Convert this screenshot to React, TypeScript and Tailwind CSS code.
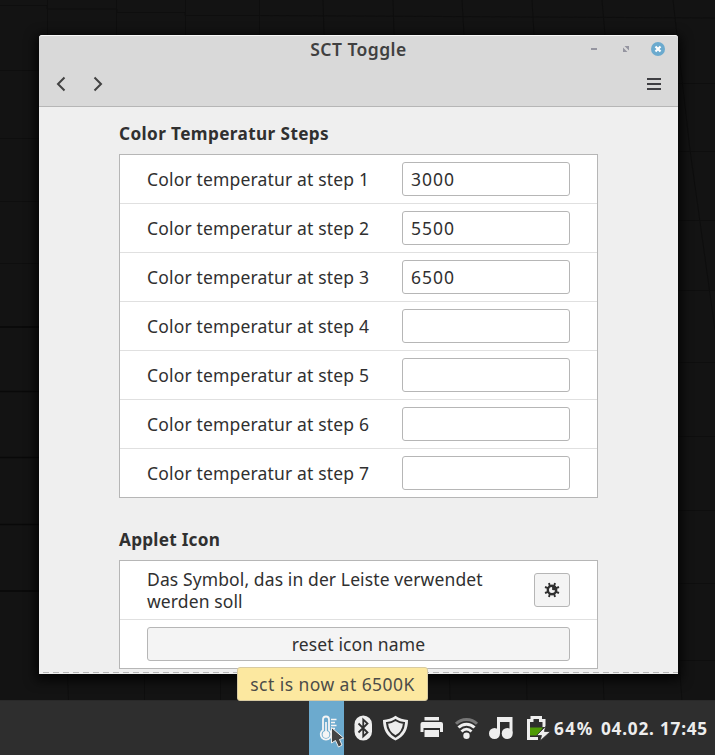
import type { ReactNode } from "react";

const steps = ["3000", "5500", "6500", "", "", "", ""];

function Wallpaper() {
  return (
    <svg className="absolute inset-0" width="715" height="755" viewBox="0 0 715 755" fill="none">
      <rect width="715" height="755" fill="#131313" />
      <g stroke="#0e0e0e" strokeWidth="1">
        <path d="M0 5.500H47V9H117V12.500H185V15.500H260L715 18" />
        <path d="M47.500 0V35M116.500 0V35M185.500 0V35M259.500 0V35M323 0L324 35M393 0L394 35M462 0L464 35M532 0L534 35M602 0L605 35M673 0L690 150L715 330" />
        <path d="M0 70.500H39M0 138.500H39M0 201.500H39M0 263.500H39" />
        <path d="M678 83.500H715M678 151.500H715M678 220.500H715M678 290.500H715M678 362.500H715M678 436.500H715M678 510.500H715M678 583.500H715M678 660.500H715" />
        <path d="M67.500 674L68.500 701M144.500 674V701M220.500 674V701M449.500 674L450 701M526.500 674L527 701M603 674L604 701M679 660L682 701" />
      </g>
      <path d="M0 327H39M0 391.500H39M0 457.500H39M0 524.500H39M0 591H39" stroke="#090909" strokeWidth="1.500" />
    </svg>
  );
}

function TrayIcon({ w, children }: { w: number; children: ReactNode }) {
  return (
    <svg className="block shrink-0" width={w} height="27" viewBox={`0 0 ${w} 27`} fill="none">
      {children}
    </svg>
  );
}

function Header() {
  return (
    <header className="h-[72px] shrink-0 rounded-t-[3px] border-t border-b border-t-[#f8f8f8] border-b-[#b6b6b6] bg-[#d9d9d9]">
      <div className="flex h-[26px] items-center pr-[13px] pl-[107px]">
        <h1 className="flex-1 text-center text-[17.5px] leading-[26px] font-semibold tracking-[0.45px] text-[#404040]">SCT Toggle</h1>
        <svg width="94" height="20" viewBox="0 0 94 20" fill="none">
          <path d="M20 10H26" stroke="#9595a0" strokeWidth="2" />
          <path d="M53.500 7H58V11.500ZM52 8.500L56.500 13H52Z" fill="#9595a0" />
          <circle cx="87" cy="10" r="7" fill="#6baace" />
          <path d="M84.500 7.500L89.500 12.500M89.500 7.500L84.500 12.500" stroke="#fff" strokeWidth="2.200" />
        </svg>
      </div>
      <div className="flex h-11 items-center justify-between pr-[14px] pl-[15px]">
        <svg width="56" height="18" viewBox="0 0 56 18" fill="none" stroke="#424242" strokeWidth="2">
          <path d="M10.500 2.500L4 9L10.500 15.500M40.500 2.500L47 9L40.500 15.500" />
        </svg>
        <svg width="18" height="18" viewBox="0 0 18 18" stroke="#3f3f43" strokeWidth="2">
          <path d="M1 4H15M1 9H15M1 14H15" />
        </svg>
      </div>
    </header>
  );
}

function Field({ step, value }: { step: number; value: string }) {
  return (
    <label className="flex h-12 items-center justify-between px-[27px]">
      <span className="text-[17.5px] tracking-[0.16px] whitespace-nowrap">Color temperatur at step {step}</span>
      <input
        defaultValue={value}
        className="h-[34px] w-[168px] rounded-[3px] border border-[#b6b6b6] bg-white px-2 text-[17.5px] tracking-[0.95px] outline-none"
      />
    </label>
  );
}

function SettingsWindow() {
  return (
    <main className="absolute top-[35px] left-[39px] flex h-[639px] w-[639px] flex-col overflow-hidden rounded-t-[3px] bg-[#efefef] text-[#303030] shadow-[0_3px_12px_3px_rgba(0,0,0,0.8)]">
      <Header />
      <div className="flex flex-1 flex-col px-20 pt-[14px]">
        <h2 className="h-[33px] text-[17.2px] leading-[26px] font-bold tracking-[0.38px]">Color Temperatur Steps</h2>
        <section className="divide-y divide-[#e0e0e0] border border-[#b6b6b6] bg-white">
          {steps.map((value, i) => (
            <div key={i}><Field step={i + 1} value={value} /></div>
          ))}
        </section>
        <h2 className="mt-7 h-[34px] text-[17.2px] leading-[27px] font-bold tracking-[0.25px]">Applet Icon</h2>
        <section className="border border-[#b6b6b6] bg-white">
          <div className="flex h-[59px] items-center justify-between border-b border-[#e0e0e0] px-[27px]">
            <p className="text-[17.5px] leading-[22px] tracking-[0.11px] whitespace-nowrap">
              Das Symbol, das in der Leiste verwendet<br />werden soll
            </p>
            <button className="flex h-[34px] w-9 items-center justify-center rounded-[3px] border border-[#b6b6b6] bg-[#f4f4f4]">
              <svg width="16" height="16" viewBox="0 0 16 16" fill="none" stroke="#303030">
                <circle cx="8" cy="8" r="4.200" strokeWidth="2.400" />
                <path d="M5.800 4L5 1M10.200 4L11 1M4 6.200L1 5M4 9.800L1 11M12 6.200L15 5M12 9.800L15 11M5.800 12L5 15M10.200 12L11 15" strokeWidth="1.900" />
                <path d="M8 4L12 4L12 8.500L8.200 8Z" fill="#303030" stroke="none" />
              </svg>
            </button>
          </div>
          <div className="flex h-12 items-center px-[27px]">
            <button className="h-[34px] w-full rounded-[3px] border border-[#b6b6b6] bg-[#f4f4f4] text-[17.5px] leading-8 tracking-[0.12px]">reset icon name</button>
          </div>
        </section>
      </div>
      <svg className="shrink-0" width="639" height="5" viewBox="0 0 639 5">
        <path d="M4 3.500H639" stroke="#b8b8b8" strokeDasharray="6 4" />
      </svg>
    </main>
  );
}

function Panel() {
  return (
    <footer className="absolute bottom-0 left-0 flex h-[55px] w-full items-center border-t border-[#292929] bg-[#2e2e2e] pl-[309px] text-[17.2px] font-bold text-[#ededed]">
      <div className="flex h-full w-[35px] items-center bg-[#6caace]">
        <TrayIcon w={35}>
          <path d="M14 15V4.500a3 3 0 0 1 6 0V15a5.300 5.300 0 1 1-6 0Z" stroke="#f5f5f5" strokeWidth="1.800" />
          <path d="M17 7V20" stroke="#f5f5f5" strokeWidth="1.700" />
          <circle cx="17" cy="19.500" r="3.400" fill="#f5f5f5" />
          <path d="M22 4.500H27.500M22 7.500H26M22 10.500H27.500M22 13.500H26" stroke="#f5f5f5" strokeWidth="1.400" />
        </TrayIcon>
      </div>
      <div className="flex w-[210px] items-center">
        <TrayIcon w={34}>
          <rect x="10.500" y="0.500" width="17.500" height="25" rx="8.750" fill="#eee" />
          <path d="M14.500 8.500L23.500 17.500L19.250 21.500V4.500L23.500 8.500L14.500 17.500" stroke="#303030" strokeWidth="1.800" />
        </TrayIcon>
        <TrayIcon w={36}>
          <path d="M17.500 0.800C14 3.500 9.500 4.500 5 5C5 14 8 21 17.500 25.500C27 21 30 14 30 5C25.500 4.500 21 3.500 17.500 0.800Z" fill="#eee" />
          <path d="M17.500 5C14.500 7 11.500 7.800 9 8C9.500 14.500 12 18.500 17.500 21.500C23 18.500 25.500 14.500 26 8C23.500 7.800 20.500 7 17.500 5Z" stroke="#303030" strokeWidth="2" />
        </TrayIcon>
        <TrayIcon w={35}>
          <path d="M10.500 2H25V5.500H10.500ZM8.500 7H27Q29 7 29 9V17H26V13H9.500V17H6.500V9Q6.500 7 8.500 7ZM10.500 15H25V22H10.500Z" fill="#eee" />
        </TrayIcon>
        <TrayIcon w={35}>
          <path d="M7 8.800C12.500 3 22.500 3 28 8.800" stroke="#777" strokeWidth="3" />
          <path d="M9.500 12.500C14 8 21 8 25.500 12.500" stroke="#eee" strokeWidth="3" />
          <path d="M12.500 16.500C15.500 13.500 19.500 13.500 22.500 16.500" stroke="#eee" strokeWidth="2.800" />
          <circle cx="17.500" cy="20.800" r="3.200" fill="#eee" />
        </TrayIcon>
        <TrayIcon w={35}>
          <path d="M13 18V2H28.500V18H25.500V7H16V18Z" fill="#eee" />
          <circle cx="10.500" cy="18.500" r="5.500" fill="#eee" />
          <circle cx="23.200" cy="18.500" r="5.500" fill="#eee" />
        </TrayIcon>
        <TrayIcon w={35}>
          <path d="M11 12.500H24L18 20.500H11Z" fill="#4e9a06" />
          <path d="M19 23.500H9.500V5.500H13V2.500H21.500V5.500H25V12" stroke="#eee" strokeWidth="3" />
          <path d="M26.500 11.500L17.500 20.500H22.500L21 26L31.500 16.500H25.500Z" fill="#eee" stroke="#2e2e2e" strokeWidth="0.800" />
        </TrayIcon>
      </div>
      <span className="w-[47px] pt-px tracking-[1.500px] whitespace-nowrap">64%</span>
      <span className="pt-px tracking-[0.780px] whitespace-nowrap">04.02. 17:45</span>
    </footer>
  );
}

export default function App() {
  return (
    <div className="relative h-[755px] w-[715px] overflow-hidden font-['Noto_Sans','Open_Sans',sans-serif]">
      <Wallpaper />
      <SettingsWindow />
      <Panel />
      <div className="absolute top-[667px] left-[237px] flex h-[34px] w-[191px] items-center justify-center rounded-[3px] border border-[#d8cba2] bg-[#fce8a0] text-[17.5px] tracking-[0.45px] whitespace-nowrap text-[#4c4c48]">
        sct is now at 6500K
      </div>
      <svg className="absolute top-[726px] left-[330px]" width="16" height="24" viewBox="0 0 16 24">
        <path d="M1.500 1.500V17L5.500 14.500L8.500 21L12 19L9.500 13.500L13.500 12Z" fill="#444" stroke="#eee" strokeWidth="1" />
      </svg>
    </div>
  );
}
